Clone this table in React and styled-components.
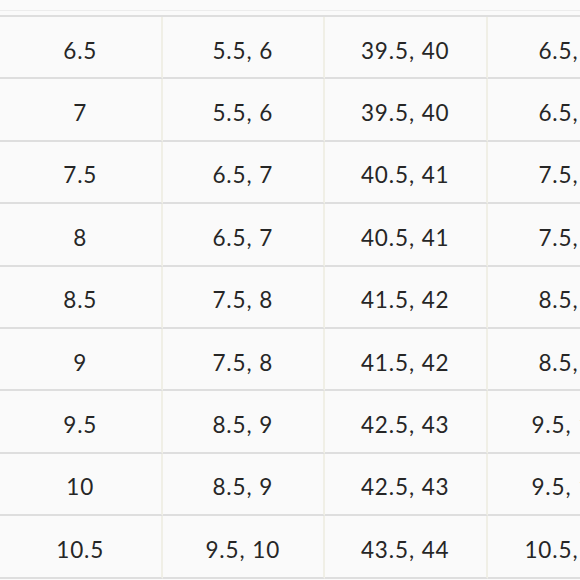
import React from 'react'
import styled, { createGlobalStyle } from 'styled-components'

const GlobalStyle = createGlobalStyle`
  html, body {
    margin: 0;
    padding: 0;
    background: #fafafa;
    overflow: hidden;
  }
  body {
    font-family: Lato, "Open Sans", sans-serif;
  }
`

const Page = styled.div`
  width: 580px;
  height: 580px;
  overflow: hidden;
  background: #fafafa;
`

const Wrapper = styled.div`
  margin-top: 10px;
  padding-top: 4px;
  border-top: 1px solid #ececec;
  width: 650px;
`

const Table = styled.div`
  display: grid;
  grid-template-columns: repeat(4, 162.5px);
  border-top: 2px solid #dedede;
`

const Cell = styled.div`
  box-sizing: border-box;
  height: 62.4px;
  display: flex;
  align-items: center;
  justify-content: center;
  padding-top: 6px;
  border-bottom: 2px solid #dedede;
  border-right: ${({ last }) => (last ? 'none' : '2px solid #f0efe6')};
  font-size: 22.5px;
  color: #262626;
  letter-spacing: 0.9px;
`

const rows = [
  ['6.5', '5.5, 6', '39.5, 40', '6.5, 7'],
  ['7', '5.5, 6', '39.5, 40', '6.5, 7'],
  ['7.5', '6.5, 7', '40.5, 41', '7.5, 8'],
  ['8', '6.5, 7', '40.5, 41', '7.5, 8'],
  ['8.5', '7.5, 8', '41.5, 42', '8.5, 9'],
  ['9', '7.5, 8', '41.5, 42', '8.5, 9'],
  ['9.5', '8.5, 9', '42.5, 43', '9.5, 10'],
  ['10', '8.5, 9', '42.5, 43', '9.5, 10'],
  ['10.5', '9.5, 10', '43.5, 44', '10.5, 11']
]

const App = () => {
  return (
    <Page>
      <GlobalStyle />
      <Wrapper>
        <Table>
          {rows.map((row, i) =>
            row.map((value, j) => (
              <Cell key={`${i}-${j}`} last={j === row.length - 1}>
                {value}
              </Cell>
            ))
          )}
        </Table>
      </Wrapper>
    </Page>
  )
}

export default App
